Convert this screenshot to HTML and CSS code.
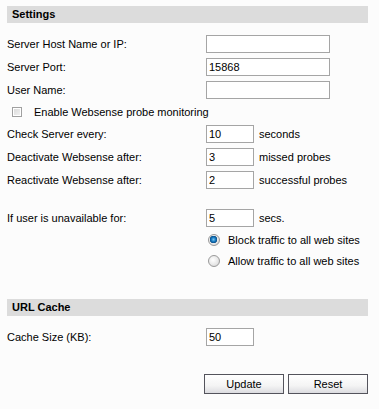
FILE: index.html
```html
<!DOCTYPE html>
<html>
<head>
<meta charset="utf-8">
<link rel="stylesheet" href="styles.css">
</head>
<body>
<div class="page">
  <div class="section-head">Settings</div>
  <div class="row first">
    <label class="lbl">Server Host Name or IP:</label>
    <input class="txt wide" type="text" value="">
  </div>
  <div class="row">
    <label class="lbl">Server Port:</label>
    <input class="txt wide" type="text" value="15868">
  </div>
  <div class="row">
    <label class="lbl">User Name:</label>
    <input class="txt wide" type="text" value="">
  </div>
  <div class="row check-row">
    <input class="chk" type="checkbox">
    <span class="chk-label">Enable Websense probe monitoring</span>
  </div>
  <div class="row tight">
    <label class="lbl">Check Server every:</label>
    <input class="txt small" type="text" value="10">
    <span class="unit">seconds</span>
  </div>
  <div class="row">
    <label class="lbl">Deactivate Websense after:</label>
    <input class="txt small" type="text" value="3">
    <span class="unit">missed probes</span>
  </div>
  <div class="row">
    <label class="lbl">Reactivate Websense after:</label>
    <input class="txt small" type="text" value="2">
    <span class="unit">successful probes</span>
  </div>
  <div class="row spaced">
    <label class="lbl">If user is unavailable for:</label>
    <input class="txt small" type="text" value="5">
    <span class="unit">secs.</span>
  </div>
  <div class="radio-row r1">
    <input class="rad" type="radio" name="traffic" checked>
    <span class="rad-label">Block traffic to all web sites</span>
  </div>
  <div class="radio-row r2">
    <input class="rad" type="radio" name="traffic">
    <span class="rad-label">Allow traffic to all web sites</span>
  </div>
  <div class="section-head url-head">URL Cache</div>
  <div class="row first">
    <label class="lbl">Cache Size (KB):</label>
    <input class="txt small" type="text" value="50">
  </div>
  <div class="buttons">
    <button class="btn" type="button">Update</button>
    <button class="btn" type="button">Reset</button>
  </div>
</div>
</body>
</html>
```
FILE: styles.css
```css
html, body {
  margin: 0;
  padding: 0;
  background: #fcfcfc;
}
body {
  font-family: "Liberation Sans", Arial, sans-serif;
  font-size: 11px;
  color: #000;
}
.page {
  padding: 6px 11px 0 7px;
  display: flex;
  flex-direction: column;
}
.section-head {
  height: 17px;
  line-height: 17px;
  background: #dcdcdc;
  font-weight: bold;
  font-size: 11px;
  padding-left: 5px;
}
.url-head {
  margin-top: 28px;
}
.row {
  display: flex;
  align-items: center;
  height: 18px;
  margin-top: 5px;
}
.row.first {
  margin-top: 12px;
}
.row.tight {
  margin-top: 0;
}
.row.spaced {
  margin-top: 20px;
}
.lbl {
  width: 199px;
  flex: none;
}
.txt {
  box-sizing: border-box;
  height: 18px;
  border: 1px solid #a5a5a5;
  background: #fff;
  font-family: "Liberation Sans", Arial, sans-serif;
  font-size: 11px;
  color: #000;
  padding: 0 2px;
  margin: 0;
  outline: none;
}
.txt.wide {
  width: 124px;
}
.txt.small {
  width: 48px;
}
.unit {
  margin-left: 5px;
}
.check-row {
  height: 26px;
  margin-top: 0;
  padding-left: 5px;
}
.chk {
  appearance: none;
  -webkit-appearance: none;
  box-sizing: border-box;
  width: 10px;
  height: 10px;
  margin: 0;
  border: 1px solid #a0a0a0;
  background: linear-gradient(135deg, #d8d8d8, #f4f4f4);
  box-shadow: inset 0 0 0 1px #fff;
}
.chk-label {
  margin-left: 12px;
}
.radio-row {
  display: flex;
  align-items: center;
  height: 20px;
  padding-left: 201px;
}
.radio-row.r1 {
  margin-top: 3px;
}
.radio-row.r2 {
  margin-top: 1px;
}
.rad {
  appearance: none;
  -webkit-appearance: none;
  box-sizing: border-box;
  width: 12px;
  height: 12px;
  margin: 0;
  border-radius: 50%;
  border: 1px solid #9a9a9a;
  background: radial-gradient(circle at 40% 40%, #ffffff 0%, #e6e6e6 60%, #c8c8c8 100%);
}
.rad:checked {
  background:
    radial-gradient(circle at 45% 45%, #7fc4f0 0px, #1a7fc4 2px, #0b4f8a 3.5px, transparent 4px),
    radial-gradient(circle at 40% 40%, #ffffff 0%, #e6e6e6 60%, #c8c8c8 100%);
}
.rad-label {
  margin-left: 8px;
}
.buttons {
  display: flex;
  justify-content: flex-end;
  gap: 4px;
  margin-top: 28px;
}
.btn {
  box-sizing: border-box;
  width: 80px;
  height: 20px;
  margin: 0;
  padding: 0;
  border: 1px solid #54545c;
  background: linear-gradient(#ffffff, #f4f4f4 60%, #dcdce0);
  font-family: "Liberation Sans", Arial, sans-serif;
  font-size: 11px;
  color: #000;
}
```
